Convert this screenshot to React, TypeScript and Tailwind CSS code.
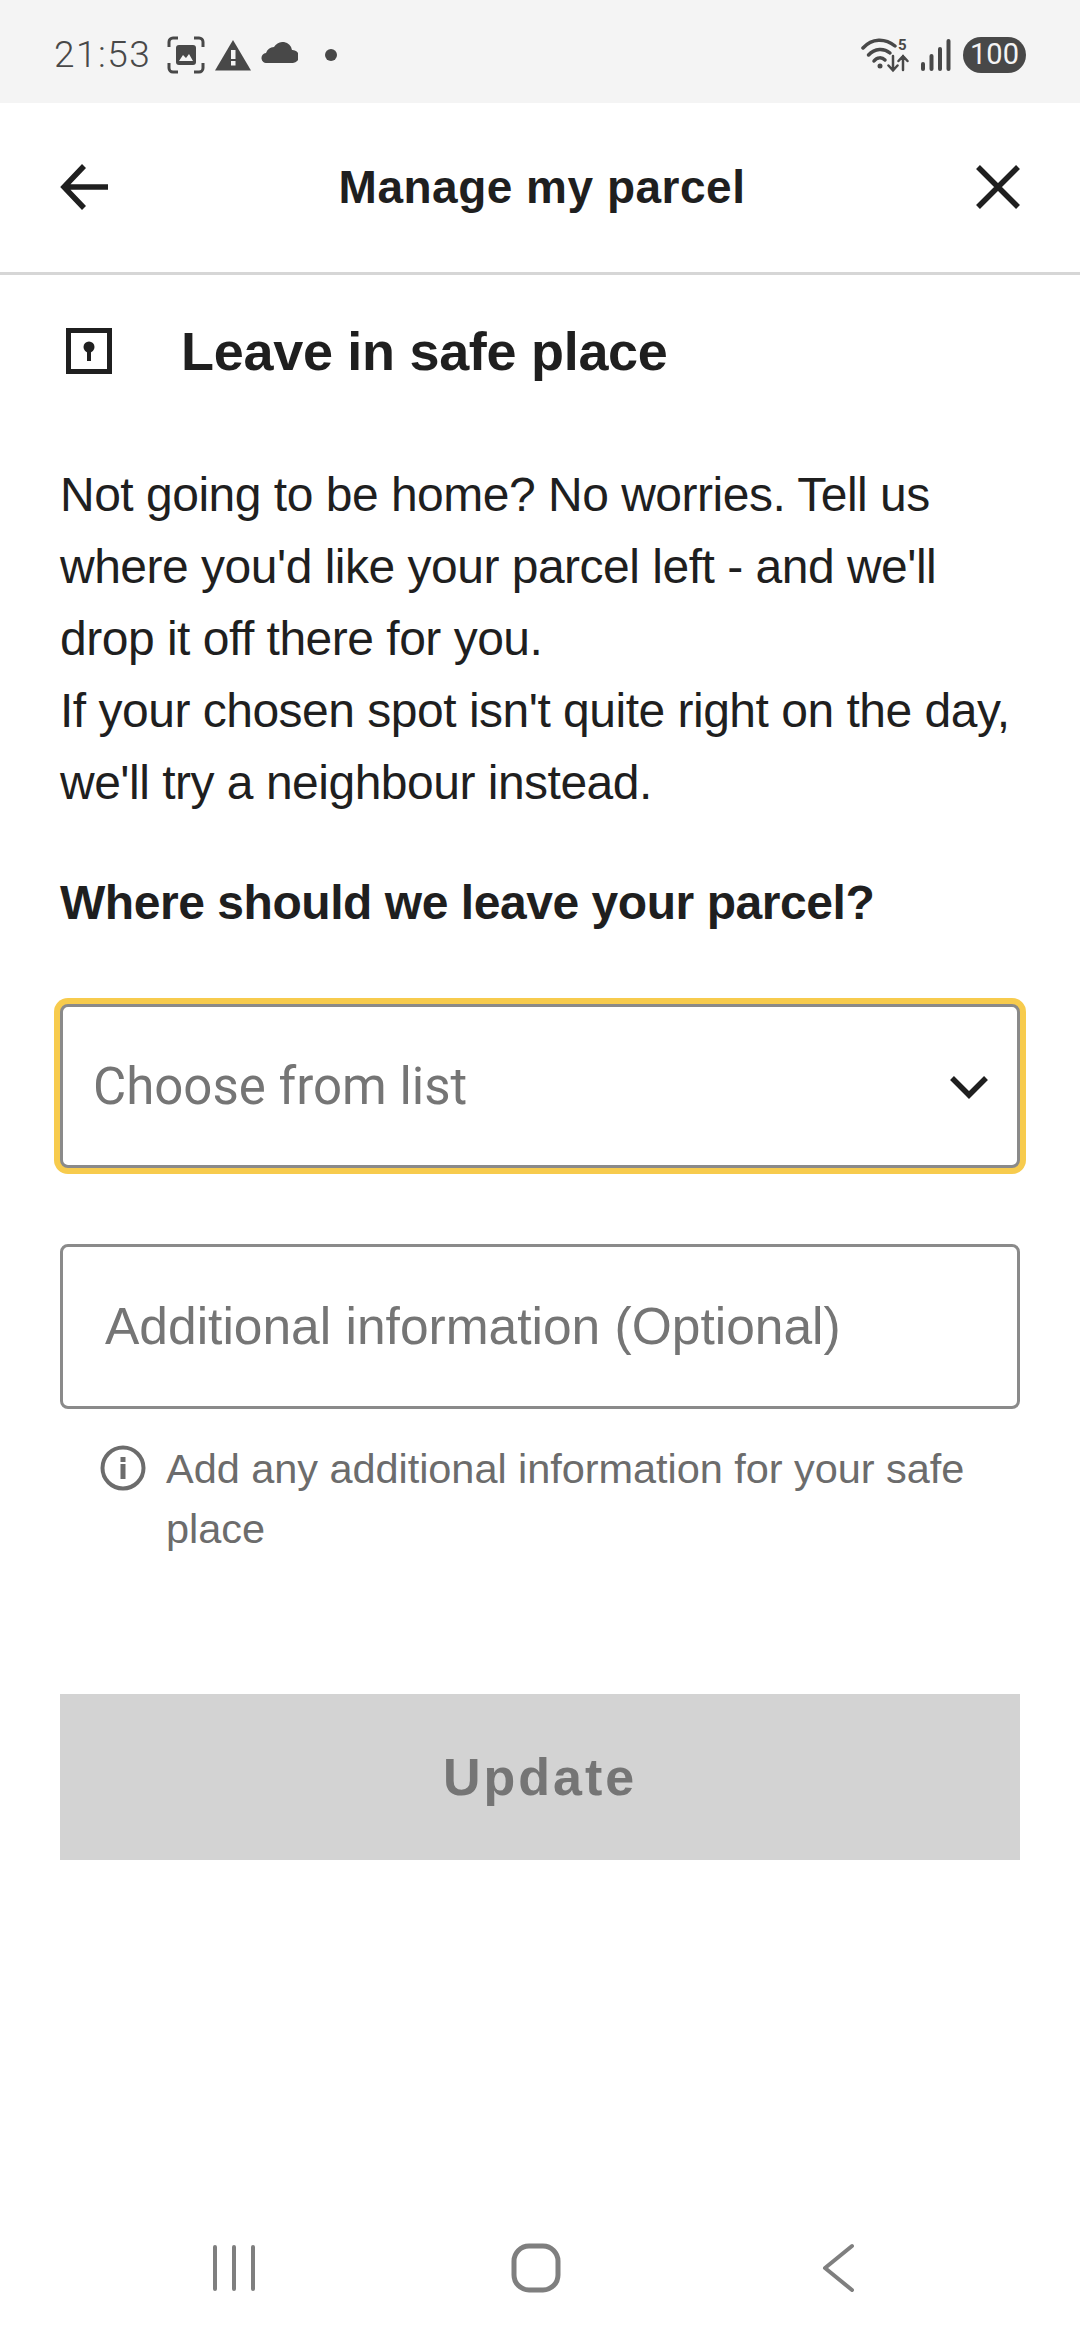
const bodyFont = "font-['Liberation_Sans',Arial,sans-serif]";

function StatusBar() {
    return (
        <div className="h-[103px] bg-[#f4f4f4] flex items-center justify-between pl-[54px] pr-[54px] pt-[6px] text-[#484848]">
            <div className="flex items-center">
                <span className="font-['Roboto',sans-serif] font-light text-[37px] tracking-[1.5px] leading-none w-[113px]">21:53</span>
                <svg width="38" height="38" viewBox="0 0 38 38" fill="none">
                    <path d="M2 11V6a4 4 0 0 1 4-4h5M27 2h5a4 4 0 0 1 4 4v5M36 27v5a4 4 0 0 1-4 4h-5M11 36H6a4 4 0 0 1-4-4v-5" stroke="#484848" strokeWidth="3" />
                    <rect x="9" y="9" width="20" height="20" rx="3" fill="#484848" />
                    <path d="M12 25l4-6 3 3 3-4 4 7z" fill="#f4f4f4" />
                </svg>
                <svg width="36" height="32" viewBox="0 0 36 32" className="ml-[10px]">
                    <path d="M18 1l18 30.500H0z" fill="#484848" />
                    <rect x="16" y="11" width="4.500" height="9" fill="#f4f4f4" />
                    <rect x="16" y="22" width="4.500" height="4.500" fill="#f4f4f4" />
                </svg>
                <svg width="37" height="21" viewBox="0 0 37 21" className="ml-[10px] mb-[5px]">
                    <path d="M6 21a5 5 0 0 1-1-10 9 9 0 0 1 8-6 11 11 0 0 1 10-5 10 10 0 0 1 8 8 6.500 6.500 0 0 1 1 13z" fill="#484848" />
                </svg>
                <span className="ml-[27px] w-[12px] h-[12px] rounded-full bg-[#484848]" />
            </div>
            <div className="flex items-center">
                <svg width="48" height="36" viewBox="0 0 48 36" fill="none" stroke="#484848" strokeLinecap="round">
                    <path d="M2 11C11 1 24 1 34 9" strokeWidth="3.500" />
                    <path d="M7.500 18C14 11 23 11 29 16" strokeWidth="3.500" />
                    <path d="M13 24C16 20 21 20 24 23" strokeWidth="3.500" />
                    <circle cx="19" cy="29" r="2.500" fill="#484848" stroke="none" />
                    <path d="M32 19v14M27.500 28.500l4.500 5 4.500-5M42 33V19M37.500 24l4.500-5 4.500 5" strokeWidth="2.500" />
                    <text x="37" y="13" fontSize="15" fontWeight="700" fill="#484848" stroke="none" fontFamily="Roboto">5</text>
                </svg>
                <svg width="32" height="34" viewBox="0 0 32 34" className="ml-[11px]" fill="#484848">
                    <rect x="1" y="24" width="4" height="9" rx="2" />
                    <rect x="9.500" y="16" width="4" height="17" rx="2" />
                    <rect x="18" y="9" width="4" height="24" rx="2" />
                    <rect x="26.500" y="1" width="4" height="32" rx="2" />
                </svg>
                <span className="ml-[11px] h-[36px] w-[63px] rounded-full bg-[#484848] text-[#f4f4f4] font-['Roboto',sans-serif] text-[29px] flex items-center justify-center leading-none">100</span>
            </div>
        </div>
    );
}

function Header() {
    return (
        <div className="h-[172px] border-b-[3px] border-[#d6d6d6] flex items-center justify-between px-[60px] pb-[1px]">
            <svg width="48" height="46" viewBox="0 0 48 46" fill="none" stroke="#1f1f1f" strokeWidth="5.500">
                <path d="M48 23H5M24 2L4 23l20 21" />
            </svg>
            <h1 className="text-[#1f1f1f] font-bold text-[46px] tracking-[0.5px] leading-none">Manage my parcel</h1>
            <svg width="44" height="44" viewBox="0 0 44 44" fill="none" stroke="#1f1f1f" strokeWidth="5.500">
                <path d="M2 2l40 40M42 2L2 42" />
            </svg>
        </div>
    );
}

function NavBar() {
    return (
        <div className="flex items-center justify-center h-[100px] pr-[14px]">
            <svg width="46" height="46" viewBox="0 0 46 46" stroke="#7f7f7f" strokeWidth="4" strokeLinecap="round" className="mr-[254px]">
                <path d="M4 2v42M23 2v42M42 2v42" />
            </svg>
            <svg width="50" height="50" viewBox="0 0 50 50" fill="none" stroke="#7f7f7f" strokeWidth="5">
                <rect x="3" y="3" width="44" height="44" rx="15" />
            </svg>
            <svg width="34" height="50" viewBox="0 0 34 50" fill="none" stroke="#7f7f7f" strokeWidth="4" strokeLinecap="round" strokeLinejoin="round" className="ml-[260px]">
                <path d="M31 3L4 25l27 22" />
            </svg>
        </div>
    );
}

export default function App() {
    return (
        <div className={`w-[1080px] h-[2340px] bg-white flex flex-col ${bodyFont}`}>
            <StatusBar />
            <Header />

            <div className="flex-1 px-[60px]">
                {/* Section title */}
                <div className="flex items-center h-[154px] pb-[3px]">
                    <svg width="46" height="46" viewBox="0 0 46 46" className="ml-[6px]">
                        <rect x="2.500" y="2.500" width="41" height="41" fill="none" stroke="#1f1f1f" strokeWidth="5" />
                        <circle cx="23" cy="19" r="5.500" fill="#1f1f1f" />
                        <rect x="21" y="20" width="4" height="13" fill="#1f1f1f" />
                    </svg>
                    <h2 className="ml-[69px] text-[54px] tracking-[-0.3px] font-bold text-[#1f1f1f] leading-none">Leave in safe place</h2>
                </div>

                <p className="text-[48px] tracking-[-0.5px] leading-[72px] text-[#1f1f1f] mt-[30px] whitespace-nowrap">
                    Not going to be home? No worries. Tell us
                    <br />
                    where you'd like your parcel left - and we'll
                    <br />
                    drop it off there for you.
                    <br />
                    If your chosen spot isn't quite right on the day,
                    <br />
                    we'll try a neighbour instead.
                </p>

                <p className="mt-[54px] text-[48px] tracking-[-0.45px] leading-[60px] font-bold text-[#1f1f1f] whitespace-nowrap">Where should we leave your parcel?</p>

                {/* Select */}
                <div className="mt-[65px] -mx-[6px] rounded-[14px] bg-[#f7cb4d] p-[6px]">
                    <div className="h-[164px] rounded-[8px] border-[3px] border-[#8a8a8a] bg-white flex items-center justify-between pl-[30px] pr-[29px]">
                        <span className="font-['Roboto',sans-serif] text-[51px] text-[#757575] leading-none">Choose from list</span>
                        <svg width="38" height="24" viewBox="0 0 38 24" fill="none" stroke="#1f1f1f" strokeWidth="5.500" className="mt-[2px]">
                            <path d="M2 3l17 17L36 3" />
                        </svg>
                    </div>
                </div>

                {/* Additional information */}
                <div className="mt-[70px] h-[165px] rounded-[8px] border-[3px] border-[#8a8a8a] flex items-center pl-[42px]">
                    <span className="text-[51.500px] text-[#757575] leading-none whitespace-nowrap">Additional information (Optional)</span>
                </div>

                <div className="mt-[38px] flex pl-[40px]">
                    <svg width="46" height="46" viewBox="0 0 46 46" fill="none" className="shrink-0 mt-[-2px]">
                        <circle cx="23" cy="23" r="20.500" stroke="#6c6c6c" strokeWidth="4" />
                        <rect x="20.500" y="19" width="5" height="15" fill="#6c6c6c" />
                        <rect x="20.500" y="12" width="5" height="5" fill="#6c6c6c" />
                    </svg>
                    <p className="ml-[20px] text-[41.500px] tracking-[-0.05px] leading-[60px] text-[#6c6c6c] -mt-[8px]">
                        Add any additional information for your safe place
                    </p>
                </div>

                <button className="mt-[135px] w-full h-[166px] bg-[#d3d3d3] text-[#757575] font-bold text-[52px] tracking-[3px]">Update</button>
            </div>

            <NavBar />
            <div className="h-[22px]" />
        </div>
    );
}
